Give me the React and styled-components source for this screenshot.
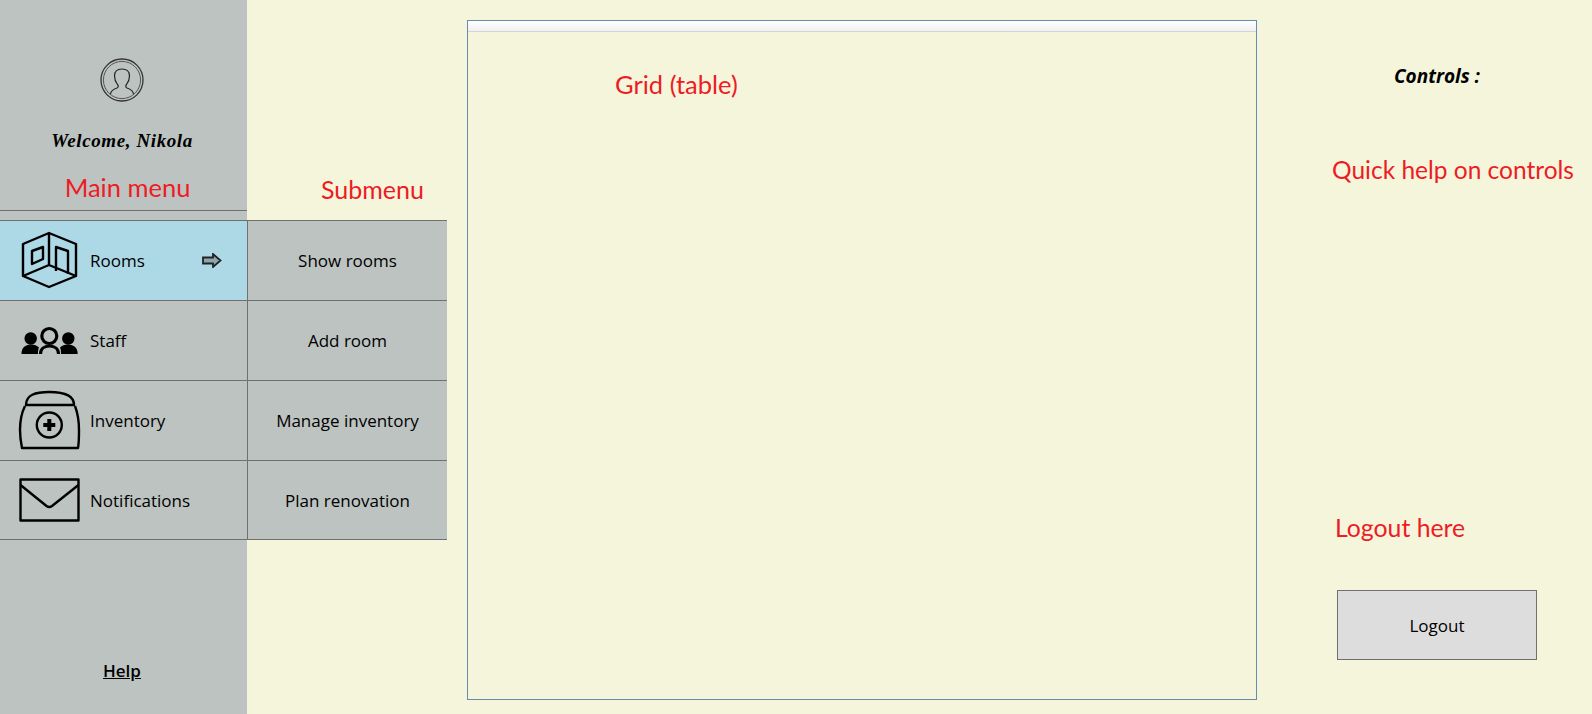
import React from "react";
import styled, { createGlobalStyle } from "styled-components";

const GlobalStyle = createGlobalStyle`
  html, body {
    margin: 0;
    padding: 0;
    background-color: #f5f5dc;
    font-family: "Open Sans", "Liberation Sans", sans-serif;
    overflow: hidden;
  }
`;

const Page = styled.div`
  display: flex;
  height: 714px;
  width: 1592px;
  background-color: #f5f5dc;
  color: #000;
`;

const Sidebar = styled.aside`
  width: 247px;
  height: 100%;
  flex-shrink: 0;
  display: flex;
  flex-direction: column;
  background-color: #bdc3c1;
`;

const Profile = styled.div`
  height: 211px;
  box-sizing: border-box;
  padding-top: 58px;
  display: flex;
  flex-direction: column;
  align-items: center;
  border-bottom: 1px solid #707070;
`;

const Avatar = styled.svg`
  width: 44px;
  height: 44px;
  margin-left: -3px;
`;

const Welcome = styled.div`
  margin-top: 28px;
  margin-left: -3px;
  font-family: "Liberation Serif", serif;
  font-style: italic;
  font-weight: 700;
  font-size: 19px;
  line-height: 22px;
  letter-spacing: 0.6px;
`;

const Note = styled.div`
  font-family: Lato, "Liberation Sans", sans-serif;
  font-size: ${(p) => p.$size || 24}px;
  line-height: 30px;
  color: #ed1c24;
  white-space: nowrap;
`;

const MainNote = styled(Note)`
  margin-top: 20px;
  margin-left: 8px;
`;

const Menu = styled.nav`
  margin-top: 9px;
  border-bottom: 1px solid #707070;
`;

const MenuRow = styled.div`
  display: flex;
  align-items: center;
  box-sizing: border-box;
  height: ${(p) => p.$height || 80}px;
  border-top: 1px solid #707070;
  background-color: ${(p) => (p.$active ? "#add8e6" : "#bdc3c1")};
  font-size: 17px;
`;

const RowIcon = styled.svg`
  width: 90px;
  height: 80px;
  flex-shrink: 0;
  margin-top: -1px;
`;

const Arrow = styled.svg`
  width: 20px;
  height: 15px;
  margin-left: auto;
  margin-right: 25px;
  margin-top: -1px;
`;

const Help = styled.a`
  margin-top: auto;
  margin-bottom: 32px;
  margin-left: -3px;
  text-align: center;
  font-size: 17px;
  font-weight: 600;
  line-height: 22px;
  text-decoration: underline;
`;

const Submenu = styled.div`
  width: 200px;
  flex-shrink: 0;
`;

const SubNote = styled(Note)`
  height: 220px;
  box-sizing: border-box;
  padding-top: 174px;
  padding-left: 74px;
`;

const SubList = styled.div`
  border-bottom: 1px solid #707070;
`;

const SubRow = styled.div`
  display: flex;
  align-items: center;
  justify-content: center;
  box-sizing: border-box;
  height: ${(p) => p.$height || 80}px;
  border-top: 1px solid #707070;
  border-left: 1px solid #707070;
  background-color: #bdc3c1;
  font-size: 17px;
`;

const GridPanel = styled.section`
  position: relative;
  width: 790px;
  height: 680px;
  flex-shrink: 0;
  margin: 20px 0 0 20px;
  box-sizing: border-box;
  border: 1px solid #688caf;
`;

const GridHeader = styled.div`
  height: 10px;
  background: linear-gradient(#ffffff, #f0f0f2);
  border-bottom: 1px solid #d5d5d5;
`;

const GridNote = styled(Note)`
  position: absolute;
  left: 147px;
  top: 48px;
`;

const Controls = styled.aside`
  width: 200px;
  margin-left: 80px;
  display: flex;
  flex-direction: column;
`;

const ControlsTitle = styled.div`
  margin-top: 64px;
  text-align: center;
  font-size: 19px;
  font-weight: 700;
  font-style: italic;
  line-height: 24px;
`;

const QuickNote = styled(Note)`
  margin-top: 67px;
  margin-left: -5px;
`;

const LogoutNote = styled(Note)`
  margin-top: 328px;
  margin-left: -2px;
`;

const LogoutButton = styled.button`
  margin-top: 47px;
  width: 200px;
  height: 70px;
  box-sizing: border-box;
  border: 1px solid #707070;
  background-color: #dddddd;
  color: #000;
  font-family: inherit;
  font-size: 17px;
`;

const line = { fill: "none", stroke: "#000", strokeWidth: 2.4, strokeLinejoin: "round" };

const RoomsIcon = () => (
  <RowIcon viewBox="0 0 90 80">
    <g {...line}>
      <path d="M49 13 L76 24 V56 L49 67 L23 56 V24 Z" />
      <path d="M49 13 V45 M23 56 L49 45 L76 56" />
      <path d="M32 31 L43 27 V39 L32 44 Z" />
      <path d="M56 51 V27 L68 31 V54" />
    </g>
  </RowIcon>
);

const StaffIcon = () => (
  <RowIcon viewBox="0 0 90 80">
    <circle cx="30.7" cy="38.5" r="6.2" />
    <circle cx="68.3" cy="38.5" r="6.2" />
    <path d="M21.5 54 C21.5 48 25 44.5 31 44.5 C34.5 44.5 37 45.5 39 47.5 C38 49.5 38 52 38 54 Z" />
    <path d="M77.7 54 C77.7 48 74 44.5 68 44.5 C64.5 44.5 62 45.5 60 47.5 C61 49.5 61 52 61 54 Z" />
    <circle cx="49.3" cy="36" r="7.5" fill="none" stroke="#000" strokeWidth="3.2" />
    <path d="M40.5 54 C40.5 49 44 46 49.5 46 C55 46 58.5 49 58.5 54" fill="none" stroke="#000" strokeWidth="3.2" />
  </RowIcon>
);

const InventoryIcon = () => (
  <RowIcon viewBox="0 0 90 80">
    <g {...line}>
      <path d="M26 25 C26 15 35 12 49.5 12 C64 12 74 15 74 25 Z" />
      <path d="M25 26 C21 34 20 40 20 50 C20 58 21 63 22 68 H78 C79 63 79 58 79 50 C79 40 78 34 75 26" />
      <circle cx="49.3" cy="45" r="12.5" />
    </g>
    <path d="M47.3 39 H51.3 V43 H55.3 V47 H51.3 V51 H47.3 V47 H43.3 V43 H47.3 Z" />
  </RowIcon>
);

const MailIcon = () => (
  <RowIcon viewBox="0 0 90 80">
    <g {...line}>
      <rect x="20.5" y="19.5" width="58" height="41" />
      <path d="M20.5 25 L46.5 46 Q49.3 48 52 46 L78.5 25" />
    </g>
  </RowIcon>
);

const menuItems = [
  { label: "Rooms", Icon: RoomsIcon, active: true },
  { label: "Staff", Icon: StaffIcon },
  { label: "Inventory", Icon: InventoryIcon },
  { label: "Notifications", Icon: MailIcon, height: 79 },
];

const subItems = [
  { label: "Show rooms" },
  { label: "Add room" },
  { label: "Manage inventory" },
  { label: "Plan renovation", height: 79 },
];

const App = () => {
  return (
    <Page>
      <GlobalStyle />
      <Sidebar>
        <Profile>
          <Avatar viewBox="0 0 44 44">
            <circle cx="22" cy="22" r="21" fill="none" stroke="#333" strokeWidth="1.3" />
            <circle cx="22" cy="22" r="18.6" fill="none" stroke="#555" strokeWidth="1" />
            <path
              d="M10.5 36 C11 32 14 31 17 30 C18.5 29.5 18.5 27.5 17.5 26.5 C15.5 24 14.5 21 14.5 18 C14.5 13.5 17.5 11 22 11 C26.5 11 29.5 13.5 29.5 18 C29.5 21 28.5 24 26.5 26.5 C25.5 27.5 25.5 29.5 27 30 C30 31 33 32 33.5 36"
              fill="none"
              stroke="#222"
              strokeWidth="1.2"
            />
          </Avatar>
          <Welcome>Welcome, Nikola</Welcome>
          <MainNote $size={25.5}>Main menu</MainNote>
        </Profile>
        <Menu>
          {menuItems.map(({ label, Icon, active, height }) => (
            <MenuRow key={label} $active={active} $height={height}>
              <Icon />
              {label}
              {active && (
                <Arrow viewBox="0 0 20 15">
                  <path
                    d="M1 4.5 H11 V1 L18.5 7.5 L11 14 V10.5 H1 Z"
                    fill="#8fa6ad"
                    stroke="#222"
                    strokeWidth="1.8"
                  />
                </Arrow>
              )}
            </MenuRow>
          ))}
        </Menu>
        <Help>Help</Help>
      </Sidebar>
      <Submenu>
        <SubNote $size={25}>Submenu</SubNote>
        <SubList>
          {subItems.map(({ label, height }) => (
            <SubRow key={label} $height={height}>
              {label}
            </SubRow>
          ))}
        </SubList>
      </Submenu>
      <GridPanel>
        <GridHeader />
        <GridNote $size={25.5}>Grid (table)</GridNote>
      </GridPanel>
      <Controls>
        <ControlsTitle>Controls :</ControlsTitle>
        <QuickNote $size={24.5}>Quick help on controls</QuickNote>
        <LogoutNote $size={24.8}>Logout here</LogoutNote>
        <LogoutButton>Logout</LogoutButton>
      </Controls>
    </Page>
  );
};

export default App;
